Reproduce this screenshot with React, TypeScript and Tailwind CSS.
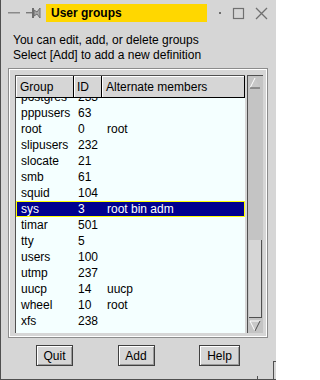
import React from 'react';

const rows: [string, string, string][] = [
  ['postgres', '233', ''],
  ['pppusers', '63', ''],
  ['root', '0', 'root'],
  ['slipusers', '232', ''],
  ['slocate', '21', ''],
  ['smb', '61', ''],
  ['squid', '104', ''],
  ['sys', '3', 'root bin adm'],
  ['timar', '501', ''],
  ['tty', '5', ''],
  ['users', '100', ''],
  ['utmp', '237', ''],
  ['uucp', '14', 'uucp'],
  ['wheel', '10', 'root'],
  ['xfs', '238', ''],
];

function Button({ label, w }: { label: string; w: string }) {
  return (
    <button
      className={`${w} h-[21px] border border-[#404040] bg-[#d6d6d6] text-[12px] leading-none text-black shadow-[inset_1px_1px_0_#ffffff,inset_-1px_-1px_0_#9a9a9a]`}
    >
      {label}
    </button>
  );
}

export default function App() {
  return (
    <div className="relative flex h-[380px] w-[276px] flex-col overflow-hidden border-b border-l border-[#505050] bg-[#d6d6d6] font-['Liberation_Sans',Arial,sans-serif] text-black">
      {/* Title bar */}
      <div className="flex h-[26px] items-center">
        <svg width="45" height="26" viewBox="0 0 45 26" className="shrink-0">
          <rect x="7" y="12" width="12" height="1" fill="#8a8a8a" />
          <rect x="7" y="13" width="12" height="1" fill="#b0b0b0" />
          <rect x="25" y="12" width="7" height="1" fill="#7a7a7a" />
          <rect x="25" y="13" width="7" height="1" fill="#b0b0b0" />
          <rect x="31" y="8" width="2" height="10" fill="#6e6e6e" />
          <path d="M33 10 L36 12 L39 8 L39 18 L36 14 L33 16 Z" fill="#a8a8a8" stroke="#6e6e6e" strokeWidth="1" />
        </svg>
        <div className="flex h-[18px] w-[161px] items-center bg-[#ffd700] pl-[5px] text-[12px] font-bold">
          User groups
        </div>
        <svg width="69" height="26" viewBox="0 0 69 26" className="shrink-0">
          <rect x="12" y="12" width="2" height="2" fill="#6e6e6e" />
          <rect x="26.5" y="8.5" width="10" height="10" fill="none" stroke="#707070" strokeWidth="1.2" />
          <path d="M49 8 L60 19 M60 8 L49 19" stroke="#707070" strokeWidth="1.3" />
        </svg>
      </div>

      {/* Instructions */}
      <div className="pl-[12px] pt-[7px] text-[12px] leading-[15px]">
        <div>You can edit, add, or delete groups</div>
        <div>Select [Add] to add a new definition</div>
      </div>

      {/* Groove frame */}
      <div className="ml-[7px] mt-[5px] h-[270px] w-[260px] border border-[#8c8c8c]">
        <div className="flex h-full w-full gap-[2px] border border-white pb-[3px] pl-[5px] pr-[3px] pt-[5px]">
          {/* List */}
          <div className="flex w-[230px] flex-col border-l border-t border-[#505050] border-b-white border-r-white bg-[#f4ffff]">
            <div className="flex h-[22px] shrink-0 text-[12px]">
              <div className="flex w-[58px] items-center border-b border-r border-black border-l-white border-t-white bg-[#d6d6d6] pl-[4px] shadow-[inset_1px_1px_0_#ffffff]">
                Group
              </div>
              <div className="flex w-[28px] items-center border-b border-r border-black bg-[#d6d6d6] pl-[3px] shadow-[inset_1px_1px_0_#ffffff]">
                ID
              </div>
              <div className="flex flex-1 items-center border-b border-r border-black bg-[#d6d6d6] pl-[4px] shadow-[inset_1px_1px_0_#ffffff]">
                Alternate members
              </div>
            </div>
            <div className="flex-1 overflow-hidden">
              <div className="-mt-[9px]">
                {rows.map(([g, id, alt]) => {
                  const sel = g === 'sys';
                  return (
                    <div
                      key={g}
                      className={`flex h-[16px] items-center text-[12px] leading-[16px] ${
                        sel ? 'border border-[#ffff00] bg-[#00008f] text-white' : 'border border-transparent'
                      }`}
                    >
                      <span className="w-[58px] pl-[4px]">{g}</span>
                      <span className="w-[28px] pl-[3px]">{id}</span>
                      <span className="pl-[4px]">{alt}</span>
                    </div>
                  );
                })}
              </div>
            </div>
          </div>

          {/* Scrollbar */}
          <div className="flex w-[16px] flex-col border-l border-t border-[#505050] border-b-white border-r-white bg-[#c4c4c4]">
            <svg width="14" height="14" viewBox="0 0 14 14" className="shrink-0">
              <path d="M7 2 L12 12 L2 12 Z" fill="#c8c8c8" />
              <path d="M2 12 L7 2" stroke="#ffffff" strokeWidth="1" />
              <path d="M7 2 L12 12 L2 12" fill="none" stroke="#505050" strokeWidth="1" strokeDasharray="0 11.2 30" />
            </svg>
            <div className="h-[150px] shrink-0" />
            <div className="mx-[1px] h-[78px] shrink-0 border-b border-r border-[#505050] border-l-white border-t-white bg-[#d6d6d6]" />
            <div className="flex-1" />
            <svg width="14" height="14" viewBox="0 0 14 14" className="shrink-0">
              <path d="M2 2 L12 2 L7 12 Z" fill="#c8c8c8" />
              <path d="M2 2 L12 2" stroke="#ffffff" strokeWidth="1" />
              <path d="M2 2 L7 12" stroke="#ffffff" strokeWidth="1" />
              <path d="M12 2 L7 12" stroke="#505050" strokeWidth="1" />
            </svg>
          </div>
        </div>
      </div>

      {/* Buttons */}
      <div className="mt-[7px] flex items-center justify-between pl-[35px] pr-[36px]">
        <Button label="Quit" w="w-[37px]" />
        <Button label="Add" w="w-[37px]" />
        <Button label="Help" w="w-[41px]" />
      </div>

      {/* Resize corner */}
      <span className="absolute right-[2px] top-[361px] h-[19px] w-[1px] bg-[#505050]" />
      <span className="absolute right-0 top-[361px] h-[1px] w-[3px] bg-[#505050]" />
      <span className="absolute left-[256px] top-[376px] h-[4px] w-[1px] bg-[#505050]" />
    </div>
  );
}
